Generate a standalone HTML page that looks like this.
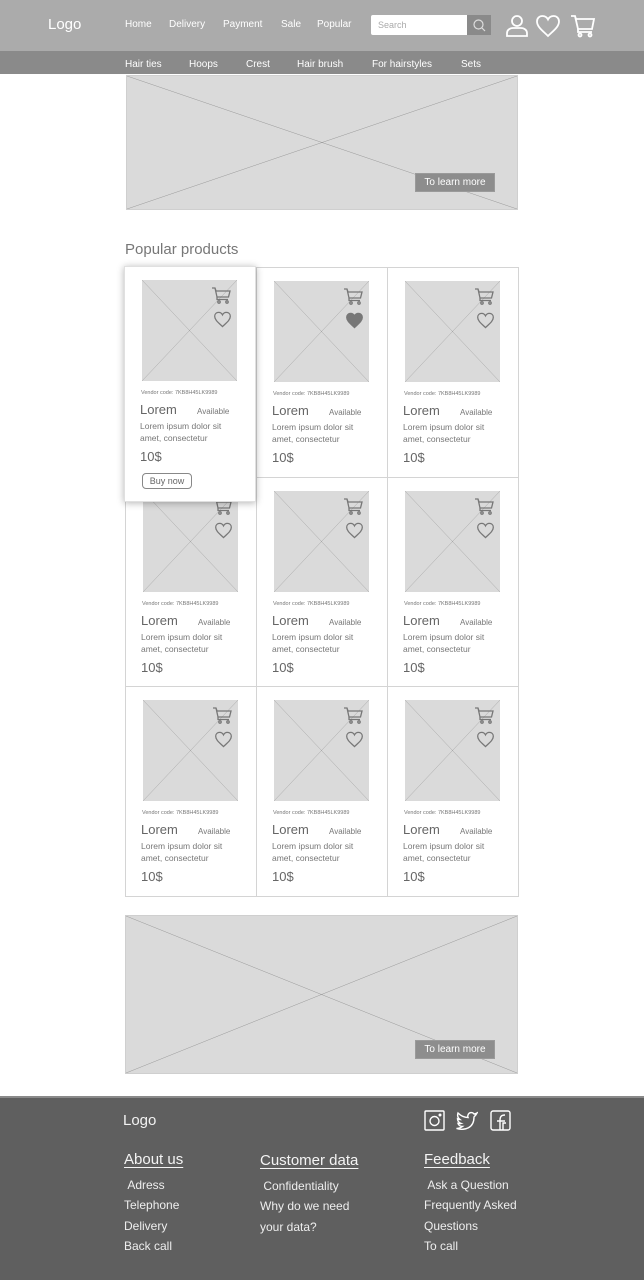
<!DOCTYPE html>
<html><head><meta charset="utf-8"><style>
*{margin:0;padding:0;box-sizing:border-box}
body{width:644px;height:1280px;position:relative;background:#fff;font-family:"Liberation Sans",sans-serif;overflow:hidden}
.a{position:absolute}
.hd{left:0;top:0;width:644px;height:51px;background:#ababab}
.sn{left:0;top:51px;width:644px;height:23px;background:#8a8a8a}
.t{position:absolute;white-space:nowrap}
.w{color:#fff}
.ph{background:#dadada;overflow:hidden}
.ph svg{position:absolute;left:0;top:0;width:100%;height:100%}
.btn{background:#8d8d8d;color:#fff;font-size:10px;line-height:18px;text-align:center;border:1px solid #9a9a9a}
.cell{position:absolute;width:132px;height:211px;border:1px solid #d4d4d4;background:#fff}
.cell .ph{position:absolute;left:17px;top:13px;width:95px;height:101px}
.v{left:16px;top:123px;font-size:5.5px;color:#777}
.l{left:15px;top:135px;font-size:13px;color:#666}
.av{left:72px;top:140px;font-size:8px;color:#777}
.d{left:15px;top:153px;font-size:8.5px;line-height:12px;color:#777}
.p{left:15px;top:182px;font-size:13px;color:#666}
.ic{position:absolute}
.f{color:#f2f2f2}
.fh{font-size:15px;text-decoration:underline;text-underline-offset:3px;color:#f4f4f4}
.fl{font-size:12px;line-height:20.3px;color:#eee}
</style></head><body>
<div class="a hd"></div>
<div class="a sn"></div>
<div class="t w" style="left:48px;top:16px;font-size:15px">Logo</div>
<div class="t w" style="left:125px;top:19px;font-size:10px">Home</div>
<div class="t w" style="left:169px;top:19px;font-size:10px">Delivery</div>
<div class="t w" style="left:223px;top:19px;font-size:10px">Payment</div>
<div class="t w" style="left:281px;top:19px;font-size:10px">Sale</div>
<div class="t w" style="left:317px;top:19px;font-size:10px">Popular</div>
<div class="a" style="left:371px;top:15px;width:98px;height:20px;background:#fff;border-radius:2px"></div>
<div class="t" style="left:378px;top:20px;font-size:9px;color:#aaa">Search</div>
<div class="a" style="left:467px;top:15px;width:24px;height:20px;background:#8a8a8a"></div>
<svg class="ic" style="left:471px;top:17px" width="16" height="16" viewBox="0 0 16 16" fill="none" stroke="#ddd" stroke-width="1.2"><circle cx="7.5" cy="7.5" r="4.5"/><path d="M11 11l3 3"/></svg>
<svg class="ic" style="left:505px;top:14px" width="24" height="24" viewBox="0 0 24 24" fill="none" stroke="#fff" stroke-width="1.8"><circle cx="12" cy="7" r="5"/><path d="M2 22v-3c0-3 3-5 6-5h8c3 0 6 2 6 5v3z"/></svg>
<svg class="ic" style="left:535px;top:14px" width="26" height="24" viewBox="0 0 26 24" fill="none" stroke="#fff" stroke-width="1.8"><path d="M13 22C8 17 2 13 2 7.5 2 4 4.5 2 7.5 2 10 2 12 3.5 13 5.5 14 3.5 16 2 18.5 2 21.5 2 24 4 24 7.5 24 13 18 17 13 22z"/></svg>
<svg class="ic" style="left:570px;top:14px" width="26" height="24" viewBox="0 0 26 24" fill="none" stroke="#fff" stroke-width="1.8"><path d="M1 2h4l1 3h18l-2 10H8L5 2"/><path d="M8 15v3h14"/><circle cx="10" cy="21" r="1.5"/><circle cx="20" cy="21" r="1.5"/></svg>
<div class="t w" style="left:125px;top:59px;font-size:10px">Hair ties</div>
<div class="t w" style="left:189px;top:59px;font-size:10px">Hoops</div>
<div class="t w" style="left:246px;top:59px;font-size:10px">Crest</div>
<div class="t w" style="left:297px;top:59px;font-size:10px">Hair brush</div>
<div class="t w" style="left:372px;top:59px;font-size:10px">For hairstyles</div>
<div class="t w" style="left:461px;top:59px;font-size:10px">Sets</div>

<div class="a ph" style="left:126px;top:75px;width:392px;height:135px;border:1px solid #cfcfcf"><svg preserveAspectRatio="none" viewBox="0 0 100 100"><path d="M0 0L100 100M100 0L0 100" stroke="#888" stroke-width="0.4" vector-effect="non-scaling-stroke"/></svg></div>
<div class="a btn" style="left:415px;top:173px;width:80px;height:19px">To learn more</div>

<div class="t" style="left:125px;top:241px;font-size:15px;color:#777">Popular products</div>

<div id="g"></div>

<div class="a ph" style="left:125px;top:915px;width:393px;height:159px;border:1px solid #cfcfcf"><svg preserveAspectRatio="none" viewBox="0 0 100 100"><path d="M0 0L100 100M100 0L0 100" stroke="#888" stroke-width="0.4" vector-effect="non-scaling-stroke"/></svg></div>
<div class="a btn" style="left:415px;top:1040px;width:80px;height:19px">To learn more</div>

<div class="a" style="left:0;top:1096px;width:644px;height:184px;background:#5f5f5f;border-top:2px solid #8a8a8a"></div>
<div class="t f" style="left:123px;top:1112px;font-size:15px">Logo</div>
<svg class="ic" style="left:424px;top:1110px" width="21" height="21" viewBox="0 0 21 21" fill="none" stroke="#fff" stroke-width="1.4"><rect x="1" y="1" width="19" height="19" rx="1"/><circle cx="10.5" cy="11" r="4.5"/><circle cx="16" cy="5" r="0.8" fill="#fff"/></svg>
<svg class="ic" style="left:456px;top:1111px" width="22" height="19" viewBox="0 0 22 19" fill="none" stroke="#fff" stroke-width="1.4"><path d="M21 2c-1 .6-2 1-3 1-1.5-2-5-2-6 1-.3 1-.3 2 0 2.5C8 6.5 5 5 2 2c-1 3 0 5 2 6.5-1 0-2-.3-2.5-.6 0 2 1.5 4 3.5 4.5-1 .3-2 .3-3 0 .5 2 2.5 3 4.5 3-2 1.5-4 2-6 2C9 20 18 17 18 6 19 5 20 4 21 2z"/></svg>
<svg class="ic" style="left:490px;top:1110px" width="21" height="21" viewBox="0 0 21 21" fill="none" stroke="#fff" stroke-width="1.4"><rect x="1" y="1" width="19" height="19" rx="2"/><path d="M10 20V10c0-3 1-5 5-5M7 11h8"/><path d="M13 20v-7h3"/></svg>
<div class="t fh" style="left:124px;top:1151px">About us</div>
<div class="t fh" style="left:260px;top:1152px">Customer data</div>
<div class="t fh" style="left:424px;top:1151px">Feedback</div>
<div class="t fl" style="left:124px;top:1175px">&nbsp;Adress<br>Telephone<br>Delivery<br>Back call</div>
<div class="t fl" style="left:260px;top:1176px">&nbsp;Confidentiality<br>Why do we need<br>your data?</div>
<div class="t fl" style="left:424px;top:1175px">&nbsp;Ask a Question<br>Frequently Asked<br>Questions<br>To call</div>

<script>
var g=document.getElementById('g'),h='';
var cart='<svg class="ic" style="left:87px;top:20px" width="19" height="17" viewBox="0 0 19 17" fill="none" stroke="#777" stroke-width="1.3"><path d="M0 1h3l1 3h14l-1.5 6H5L3 1"/><path d="M5 10v2.5h11"/><circle cx="7" cy="15" r="1.2"/><circle cx="15" cy="15" r="1.2"/></svg>';
function heart(f){return '<svg class="ic" style="left:88px;top:44px" width="19" height="17" viewBox="0 0 26 24" fill="'+(f?'#777':'none')+'" stroke="#777" stroke-width="1.8"><path d="M13 22C8 17 2 13 2 7.5 2 4 4.5 2 7.5 2 10 2 12 3.5 13 5.5 14 3.5 16 2 18.5 2 21.5 2 24 4 24 7.5 24 13 18 17 13 22z"/></svg>';}
var ph='<div class="ph"><svg preserveAspectRatio="none" viewBox="0 0 100 100"><path d="M0 0L100 100M100 0L0 100" stroke="#999" stroke-width="0.4" vector-effect="non-scaling-stroke"/></svg></div>';
var body='<div class="t v">Vendor code: 7KB8H45LK9989</div><div class="t l">Lorem</div><div class="t av">Available</div><div class="t d">Lorem ipsum dolor sit<br>amet, consectetur</div><div class="t p">10$</div>';
for(var r=0;r<3;r++)for(var c=0;c<3;c++){
 if(r==0&&c==0)continue;
 h+='<div class="cell" style="left:'+(125+c*131)+'px;top:'+Math.round(267+r*209.5)+'px">'+ph+cart+heart(r==0&&c==1)+body+'</div>';
}
h+='<div class="cell" style="left:124px;top:266px;width:132px;height:236px;border:1px solid #e0e0e0;box-shadow:0 1px 7px rgba(0,0,0,.3);z-index:2">'+ph+cart+heart(false)+body+'<div class="t" style="left:17px;top:206px;width:50px;height:16px;border:1px solid #888;border-radius:4px;font-size:9px;line-height:14px;text-align:center;color:#666">Buy now</div></div>';
g.innerHTML=h;
</script>
</body></html>
